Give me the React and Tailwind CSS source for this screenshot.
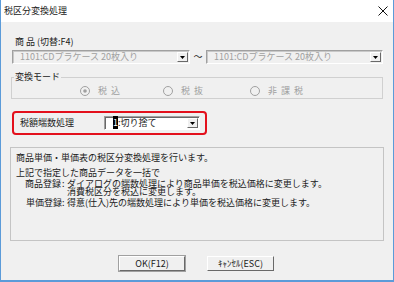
function Arrow() {
  return (
    <svg viewBox="0 0 5 3" className="h-[3px] w-[5px]" aria-hidden="true">
      <path d="M0 0h5L2.5 3Z" fill="#000" />
    </svg>
  )
}

function DropButton() {
  return (
    <div className="mr-[1px] flex h-[10px] w-[11px] items-center justify-center border border-t-white border-l-white border-b-[#696969] border-r-[#696969] bg-[#f0f0f0] pt-[1px]">
      <Arrow />
    </div>
  )
}

function Combo({ text, width }) {
  return (
    <div className={`${width} flex h-[14px] items-center justify-between border border-t-[#a0a0a0] border-l-[#a0a0a0] border-b-white border-r-white bg-[#f0f0f0] shadow-[inset_1px_1px_0_#c8c8c8]`}>
      <span className="pl-[7px] text-[#a0a0a0]">{text}</span>
      <DropButton />
    </div>
  )
}

function Radio({ checked, label }) {
  return (
    <div className="flex items-center gap-[8px]">
      <svg viewBox="0 0 10 10" className="h-[10px] w-[10px]" aria-hidden="true">
        <circle cx="5" cy="5" r="4.5" fill="#f0f0f0" stroke="#a0a0a0" />
        {checked && <circle cx="5" cy="5" r="1.8" fill="#a0a0a0" />}
      </svg>
      <span className="flex gap-[4px] text-[#a0a0a0]">
        {label.map((c) => (
          <span key={c}>{c}</span>
        ))}
      </span>
    </div>
  )
}

export default function App() {
  return (
    <main className="flex h-[282px] w-[394px] flex-col border-x border-b-2 border-[#5b9bd9] bg-[#f0f0f0] font-['Noto_Sans_CJK_JP',sans-serif] text-[9px] leading-[10px] text-[#1a1a1a]">
      <div className="flex h-[22px] items-center justify-between bg-white pl-[3px] pr-[5px]">
        <span className="text-[9px]">税区分変換処理</span>
        <svg viewBox="0 0 10 10" className="h-[10px] w-[10px]" aria-hidden="true">
          <path d="M0.5 0.5l9 9M9.5 0.5l-9 9" stroke="#111" strokeWidth="1" />
        </svg>
      </div>

      <div className="flex flex-1 flex-col">
        <div className="pl-[14px] pt-[14px] leading-[12px]">商 品 (切替:F4)</div>

        <div className="mt-[2px] flex items-center pl-[11px]">
          <Combo text="1101:CDプラケース 20枚入り" width="w-[178px]" />
          <span className="w-[16px] text-center">〜</span>
          <Combo text="1101:CDプラケース 20枚入り" width="w-[177px]" />
        </div>

        <fieldset className="ml-[10px] mt-[8px] w-[372px] border border-[#d0d0d0]">
          <legend className="ml-[2px] px-[1px] leading-[10px]">変換モード</legend>
          <div className="mt-[2px] flex h-[14px] items-center pl-[68px]">
            <div className="w-[83px]">
              <Radio checked label={['税', '込']} />
            </div>
            <div className="w-[87px]">
              <Radio label={['税', '抜']} />
            </div>
            <Radio label={['非', '課', '税']} />
          </div>
        </fieldset>

        <div className="ml-[11px] mt-[12px] flex h-[24px] w-[195px] items-center rounded-[4px] border-2 border-[#e3101c] pl-[6px]">
          <span className="w-[84px]">税額端数処理</span>
          <div className="flex h-[14px] w-[96px] items-center justify-between border border-t-[#a0a0a0] border-l-[#a0a0a0] border-b-white border-r-white bg-white shadow-[inset_1px_1px_0_#696969]">
            <span className="pl-[8px]">
              <span className="bg-black text-white">1</span>:切り捨て
            </span>
            <DropButton />
          </div>
        </div>

        <div className="ml-[9px] mt-[12px] h-[94px] w-[374px] border border-[#c4c4c4] pl-[5px] pt-[5px]">
          <div>商品単価・単価表の税区分変換処理を行います。</div>
          <div className="mt-[5px]">上記で指定した商品データを一括で</div>
          <div className="mt-[2px] flex pl-[9px] leading-[7px]">
            <span className="w-[37px]">商品登録</span>
            <span className="w-[5px]">:</span>
            <span>ダイアログの端数処理により商品単価を税込価格に変更します。</span>
          </div>
          <div className="mt-[1px] pl-[51px] leading-[7px]">消費税区分を税込に変更します。</div>
          <div className="mt-[3px] flex pl-[10px]">
            <span className="w-[36px]">単価登録</span>
            <span className="w-[5px]">:</span>
            <span>得意(仕入)先の端数処理により単価を税込価格に変更します。</span>
          </div>
        </div>

        <div className="ml-[118px] mt-[15px] flex gap-[22px]">
          <button type="button" className="flex h-[15px] w-[66px] items-center justify-center border border-t-white border-l-white border-b-[#696969] border-r-[#696969] bg-[#f0f0f0] outline outline-1 outline-[#a0a0a0] text-[9px]">
            OK(F12)
          </button>
          <button type="button" className="flex h-[15px] w-[67px] items-center justify-center border border-t-white border-l-white border-b-[#696969] border-r-[#696969] bg-[#f0f0f0] text-[9px]">
            ｷｬﾝｾﾙ(ESC)
          </button>
        </div>
      </div>
    </main>
  )
}
